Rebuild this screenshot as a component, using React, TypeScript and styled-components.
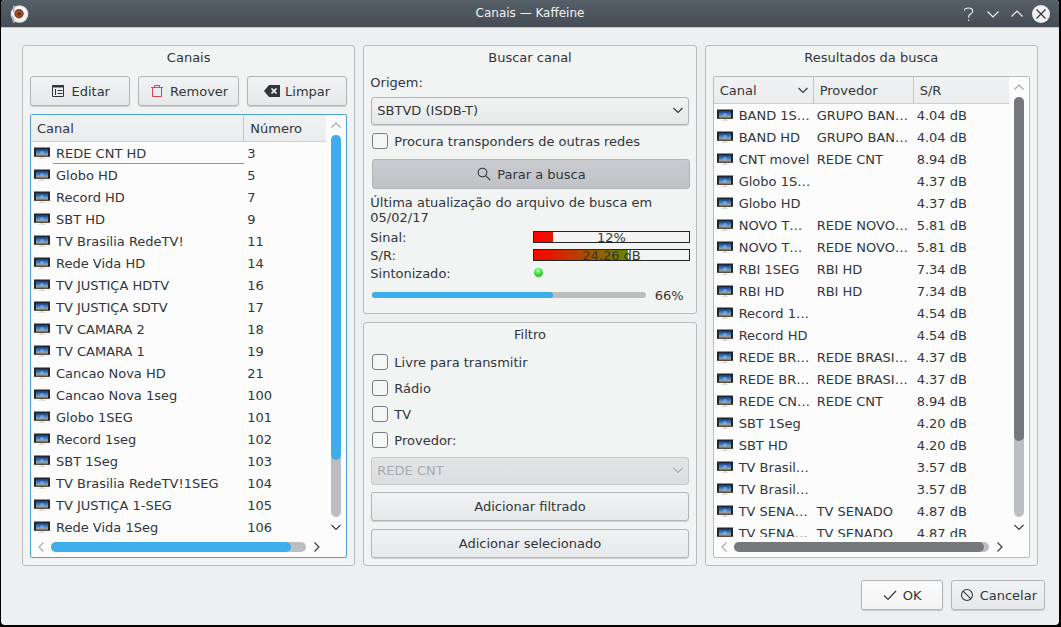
import React from "react";
import styled, { createGlobalStyle, css } from "styled-components";

const ink = "#31363b";
const line = "#b9bbbc";
const blue = "#3daee9";

const GlobalStyle = createGlobalStyle`
  * { box-sizing: border-box; }
  body {
    margin: 0;
    background: #000;
    color: ${ink};
    font: 13px/15px "DejaVu Sans", sans-serif;
  }
  button, select, input { font: inherit; color: inherit; margin: 0; }
`;

const Desktop = styled.div`
  display: flex;
  min-height: 100vh;
  padding: 0 2px 2px 1px;
`;

const Window = styled.div`
  flex: 1;
  min-width: 0;
  display: flex;
  flex-direction: column;
  overflow: hidden;
  background: #eeeff1;
  border-radius: 4px;
`;

const TitleBar = styled.header`
  display: grid;
  grid-template-columns: 1fr auto 1fr;
  align-items: center;
  height: 28px;
  padding: 0 8px;
  color: #eff0f1;
  background: linear-gradient(#566069, #454c54);
  border-bottom: 1px solid #7fe0ea;
`;

const WindowTitle = styled.h1`
  margin: 0;
  font-size: 12px;
  font-weight: 400;
`;

const WindowButtons = styled.div`
  display: flex;
  justify-content: flex-end;
  gap: 4px;
`;

const WindowButton = styled.button`
  display: flex;
  width: 20px;
  height: 20px;
  padding: 0;
  border: 0;
  background: none;
`;

const Columns = styled.main`
  flex: 1;
  display: grid;
  grid-template-columns: repeat(3, minmax(0, 1fr));
  gap: 8px;
  padding: 17px 21px 0;
`;

const Stack = styled.div`
  display: flex;
  flex-direction: column;
  gap: 8px;
`;

const Panel = styled.section<{ $grow?: boolean; $pad?: number }>`
  display: flex;
  flex-direction: column;
  flex: ${(p) => (p.$grow ? "1 0 auto" : "none")};
  padding: 4px ${(p) => p.$pad ?? 7}px 7px;
  background: #f2f3f3;
  border: 1px solid ${line};
  border-radius: 3px;
`;

const PanelTitle = styled.h2<{ $gap?: number }>`
  margin: 0 0 ${(p) => p.$gap ?? 11}px;
  font-size: 13px;
  font-weight: 400;
  text-align: center;
`;

const Toolbar = styled.div`
  display: grid;
  grid-template-columns: repeat(3, 1fr);
  gap: 8px;
  margin-bottom: 8px;
`;

const Button = styled.button<{ $pressed?: boolean; $light?: boolean }>`
  display: flex;
  align-items: center;
  justify-content: center;
  gap: 5px;
  height: 30px;
  padding: 0 7px;
  white-space: nowrap;
  border: 1px solid #b2b5b7;
  border-radius: 3px;
  background: ${(p) => (p.$light ? "linear-gradient(#fbfbfb, #f4f4f5)" : "linear-gradient(#f1f2f3, #e6e8e9)")};
  box-shadow: 0 1px 1px rgba(0, 0, 0, 0.15);
  ${(p) =>
    p.$pressed &&
    css`
      background: linear-gradient(#cacbce, #c1c2c6);
      box-shadow: none;
    `}
`;

const ListFrame = styled.div<{ $active?: boolean }>`
  flex: 1 1 0px;
  min-height: 0;
  display: grid;
  grid-template: minmax(0, 1fr) 20px / minmax(0, 1fr) 20px;
  overflow: hidden;
  background: #fcfcfd;
  border: 1px solid ${(p) => (p.$active ? "#4aa5cc" : line)};
  border-radius: 2px;
`;

const Viewport = styled.div`
  overflow: hidden;
  min-height: 0;
  contain: size;
`;

const Table = styled.table`
  width: 100%;
  table-layout: fixed;
  border-spacing: 0;
`;

const Col = styled.col<{ $width?: string }>`
  width: ${(p) => p.$width ?? "auto"};
`;

const Th = styled.th`
  height: 27px;
  padding: 0 4px 0 6px;
  font-weight: 400;
  text-align: left;
  background: linear-gradient(#f0f1f2, #ebecee);
  border-bottom: 1px solid #cdcfd0;
  &:not(:last-child) { border-right: 1px solid #c3c5c6; }
`;

const SortHead = styled.span`
  display: flex;
  align-items: center;
  justify-content: space-between;
`;

const Td = styled.td`
  height: 22px;
  padding: 0 0 0 3px;
  overflow: hidden;
  white-space: nowrap;
  text-overflow: ellipsis;
`;

const NameCell = styled.div<{ $current?: boolean }>`
  display: flex;
  align-items: center;
  height: 22px;
  svg { flex: none; }
  span {
    flex: 1;
    min-width: 0;
    height: 22px;
    margin-left: 3px;
    padding-left: 3px;
    line-height: 23px;
    overflow: hidden;
    text-overflow: ellipsis;
    ${(p) => p.$current && `box-shadow: inset 0 -1px 0 0 ${blue};`}
  }
`;

const Bar = styled.div<{ $vertical?: boolean }>`
  display: flex;
  flex-direction: ${(p) => (p.$vertical ? "column" : "row")};
  align-items: center;
`;

const BarArrow = styled.button`
  display: flex;
  align-items: center;
  justify-content: center;
  width: 20px;
  height: 20px;
  padding: 0;
  border: 0;
  background: none;
  &:disabled { color: #a5a8aa; }
`;

const Track = styled.div<{ $vertical?: boolean }>`
  flex: 1;
  ${(p) => (p.$vertical ? "width: 10px;" : "height: 10px;")}
  border-radius: 5px;
  background: #bdbec1;
`;

const Thumb = styled.div<{ $color: string }>`
  width: 100%;
  height: 100%;
  border-radius: 5px;
  background: ${(p) => p.$color};
`;

const FieldLabel = styled.label`
  margin-bottom: 7px;
`;

const SelectBox = styled.div`
  position: relative;
  margin: 0 1px;
  svg {
    position: absolute;
    right: 5px;
    top: 7px;
    pointer-events: none;
  }
`;

const Select = styled.select`
  display: block;
  width: 100%;
  height: 28px;
  padding: 0 24px 1px 5px;
  appearance: none;
  border: 1px solid #b2b5b7;
  border-radius: 3px;
  background: linear-gradient(#f1f2f2, #e6e8e8);
  box-shadow: 0 1px 1px rgba(0, 0, 0, 0.15);
  &:disabled {
    opacity: 1;
    color: #a9abae;
    border-color: #c6c7c9;
    background: linear-gradient(#e3e4e6, #dcdddf);
    box-shadow: none;
  }
  &:disabled + svg { color: #a9abae; }
`;

const CheckLabel = styled.label`
  display: flex;
  align-items: center;
  gap: 6px;
  height: 16px;
  margin-left: 2px;
`;

const CheckBox = styled.input`
  appearance: none;
  flex: none;
  width: 16px;
  height: 16px;
  border: 1px solid #7c7f82;
  border-radius: 3px;
  background: #f6f6f7;
`;

const SearchOptions = styled.div`
  display: grid;
  gap: 10px;
  margin: 8px 0 6px;
`;

const SearchButton = styled(Button)`
  margin-left: 2px;
`;

const Note = styled.p`
  margin: 0 0 4px;
`;

const Status = styled.dl`
  display: grid;
  grid-template-columns: 163px minmax(0, 1fr);
  grid-auto-rows: 16px;
  row-gap: 2px;
  align-items: center;
  margin: 0 0 6px;
  dd { margin: 0; }
`;

const Meter = styled.div<{ $fill: string }>`
  display: flex;
  align-items: center;
  justify-content: center;
  height: 12px;
  padding-top: 1px;
  line-height: 11px;
  border: 1px solid #232629;
  background: linear-gradient(90deg, #ff0000, #00e000) padding-box;
  position: relative;
  &::before {
    content: "";
    position: absolute;
    inset: 0 0 0 ${(p) => p.$fill};
    background: #f4f4f4;
  }
  span { position: relative; }
`;

const ProgressRow = styled.div`
  display: flex;
  align-items: center;
  gap: 9px;
  height: 16px;
  margin: 0 6px 3px 2px;
`;

const ProgressTrack = styled.div`
  flex: 1;
  height: 6px;
  border-radius: 3px;
  background: #bdbdbf;
`;

const ProgressFill = styled.div`
  height: 6px;
  border-radius: 3px;
  background: ${blue};
`;

const CheckGroup = styled.div`
  display: grid;
  gap: 10px;
  margin-bottom: 9px;
`;

const Actions = styled.div`
  display: grid;
  gap: 8px;
  margin: 7px 1px 0;
`;

const ActionButton = styled(Button)`
  height: 29px;
`;

const Footer = styled.footer`
  display: flex;
  justify-content: flex-end;
  gap: 8px;
  padding: 14px 14px 15px;
`;

const FooterButton = styled(Button)`
  min-width: 82px;
`;

type Dir = "up" | "down" | "left" | "right";
const chevrons: Record<Dir, string> = {
  up: "M1.5 8.5 6 4l4.5 4.5",
  down: "M1.5 4 6 8.5l4.5-4.5",
  left: "M8.5 1.5 4 6l4.5 4.5",
  right: "M4.5 1.5 9 6l-4.5 4.5",
};

const Chevron = ({ dir, size = 12 }: { dir: Dir; size?: number }) => (
  <svg width={size} height={size} viewBox="0 0 12 12" fill="none" stroke="currentColor" strokeWidth="1.1">
    <path d={chevrons[dir]} />
  </svg>
);

const TvIcon = () => (
  <svg width="16" height="12" viewBox="0 0 16 12">
    <defs>
      <linearGradient id="screen" x1="0" y1="0" x2="0" y2="1">
        <stop offset="0" stopColor="#16386f" />
        <stop offset=".5" stopColor="#4482c8" />
        <stop offset=".75" stopColor="#8aa3b4" />
        <stop offset="1" stopColor="#806a48" />
      </linearGradient>
    </defs>
    <path d="M0 .5h16V10H0z" fill="#20262e" />
    <path d="M2 2h12v7H2z" fill="url(#screen)" />
    <circle cx="8" cy="5.7" r="1.7" fill="#8fc0ea" opacity=".6" />
    <path d="M0 9.5h16" stroke="#6b5940" strokeWidth=".8" />
    <path d="M6.500 10h3v1h2v.8h-7V11h2z" fill="#d2d3d3" />
  </svg>
);

const AppIcon = () => (
  <svg width="20" height="20" viewBox="0 0 20 20">
    <circle cx="10.500" cy="10" r="8.800" fill="#e9e7e5" />
    <circle cx="10.800" cy="9.800" r="7" fill="#fbfaf9" />
    <circle cx="10" cy="9.700" r="4.700" fill="#7d402a" />
    <circle cx="10" cy="9.700" r="3.200" fill="#a4501f" />
    <circle cx="10.200" cy="9.700" r="1.500" fill="#5f2816" />
    <path d="M5 2.500 4.500 7M3.500 13l1.500 5" stroke="#b4b7ba" strokeWidth="2" strokeLinecap="round" />
  </svg>
);

const EditIcon = () => (
  <svg width="16" height="16" viewBox="0 0 16 16" fill="none" stroke="currentColor">
    <path d="M2.500 2.500h11v11h-11z" />
    <path d="M2 3.500h12" strokeWidth="2" />
    <path d="M5.500 6v6M7.500 7.500h5M7.500 10.500h5" />
  </svg>
);

const TrashIcon = () => (
  <svg width="16" height="16" viewBox="0 0 16 16" fill="none" stroke="#da4453">
    <path d="M2 4.500h12M5.500 4.500v-2h5v2M3.500 5v8.500h9V5" />
  </svg>
);

const ClearIcon = () => (
  <svg width="16" height="16" viewBox="0 0 16 16">
    <path d="M0 8l5-6h11v12H5z" fill="#31363b" />
    <path d="M7.500 5.500l5 5M12.500 5.500l-5 5" stroke="#fff" strokeWidth="1.600" />
  </svg>
);

const SearchIcon = () => (
  <svg width="16" height="16" viewBox="0 0 16 16" fill="none" stroke="currentColor" strokeWidth="1.100">
    <circle cx="6.500" cy="6.500" r="4.300" />
    <path d="M9.600 9.600l4.600 4.600" />
  </svg>
);

const OkIcon = () => (
  <svg width="16" height="16" viewBox="0 0 16 16" fill="none" stroke="currentColor" strokeWidth="1.100">
    <path d="M2 8.500l4 4 8-8.500" />
  </svg>
);

const CancelIcon = () => (
  <svg width="16" height="16" viewBox="0 0 16 16" fill="none" stroke="currentColor" strokeWidth="1.100">
    <circle cx="8" cy="8" r="5.500" />
    <path d="M4.100 4.100l7.800 7.800" />
  </svg>
);

const Led = () => (
  <svg width="11" height="16" viewBox="0 0 11 16">
    <defs>
      <radialGradient id="led" cx=".45" cy=".3" r=".65">
        <stop offset="0" stopColor="#c6ffc2" />
        <stop offset=".5" stopColor="#4fe84b" />
        <stop offset="1" stopColor="#26bd2c" />
      </radialGradient>
    </defs>
    <circle cx="5.500" cy="8.500" r="4.500" fill="url(#led)" />
  </svg>
);

const HelpGlyph = () => (
  <svg width="20" height="20" viewBox="0 0 20 20" fill="none" stroke="#eff0f1" strokeWidth="1.100">
    <path d="M5.500 6.500C5.500 4.700 7.200 4 9.500 4s4.200.9 4.200 3.200c0 2.600-4 2.500-4 5.300v1.200M9.700 15.500V17" />
  </svg>
);

const CloseGlyph = () => (
  <svg width="20" height="20" viewBox="0 0 20 20">
    <circle cx="10" cy="10" r="9" fill="#eff0f1" />
    <path d="M5.500 5.500l9 9M14.500 5.500l-9 9" stroke="#31363b" strokeWidth="1.200" />
  </svg>
);

const ShadeGlyph = ({ up }: { up?: boolean }) => (
  <svg width="20" height="20" viewBox="0 0 20 20" fill="none" stroke="#eff0f1" strokeWidth="1.200">
    <path d={up ? "M4.500 12.500l5.500-5.500 5.500 5.500" : "M4.500 7.500l5.500 5.500 5.500-5.500"} />
  </svg>
);

const channels: [string, number][] = [
  ["REDE CNT HD", 3],
  ["Globo HD", 5],
  ["Record HD", 7],
  ["SBT HD", 9],
  ["TV Brasilia RedeTV!", 11],
  ["Rede Vida HD", 14],
  ["TV JUSTIÇA HDTV", 16],
  ["TV JUSTIÇA SDTV", 17],
  ["TV CAMARA 2", 18],
  ["TV CAMARA 1", 19],
  ["Cancao Nova HD", 21],
  ["Cancao Nova 1seg", 100],
  ["Globo 1SEG", 101],
  ["Record 1seg", 102],
  ["SBT 1Seg", 103],
  ["TV Brasilia RedeTV!1SEG", 104],
  ["TV JUSTIÇA 1-SEG", 105],
  ["Rede Vida 1Seg", 106],
];

const results: [string, string, string][] = [
  ["BAND 1S…", "GRUPO BAN…", "4.04"],
  ["BAND HD", "GRUPO BAN…", "4.04"],
  ["CNT movel", "REDE CNT", "8.94"],
  ["Globo 1S…", "", "4.37"],
  ["Globo HD", "", "4.37"],
  ["NOVO T…", "REDE NOVO…", "5.81"],
  ["NOVO T…", "REDE NOVO…", "5.81"],
  ["RBI 1SEG", "RBI HD", "7.34"],
  ["RBI HD", "RBI HD", "7.34"],
  ["Record 1…", "", "4.54"],
  ["Record HD", "", "4.54"],
  ["REDE BR…", "REDE BRASI…", "4.37"],
  ["REDE BR…", "REDE BRASI…", "4.37"],
  ["REDE CN…", "REDE CNT", "8.94"],
  ["SBT 1Seg", "", "4.20"],
  ["SBT HD", "", "4.20"],
  ["TV Brasil…", "", "3.57"],
  ["TV Brasil…", "", "3.57"],
  ["TV SENA…", "TV SENADO", "4.87"],
  ["TV SENA…", "TV SENADO", "4.87"],
];

interface ScrollProps {
  vertical?: boolean;
  color: string;
  size: number;
}

const ScrollBar = ({ vertical, color, size }: ScrollProps) => (
  <Bar $vertical={vertical}>
    <BarArrow disabled aria-label={vertical ? "Rolar para cima" : "Rolar para a esquerda"}>
      <Chevron dir={vertical ? "up" : "left"} />
    </BarArrow>
    <Track $vertical={vertical}>
      <Thumb $color={color} style={vertical ? { height: `${size}%` } : { width: `${size}%` }} />
    </Track>
    <BarArrow aria-label={vertical ? "Rolar para baixo" : "Rolar para a direita"}>
      <Chevron dir={vertical ? "down" : "right"} />
    </BarArrow>
  </Bar>
);

const Check = ({ label }: { label: string }) => (
  <CheckLabel>
    <CheckBox type="checkbox" />
    {label}
  </CheckLabel>
);

const Name = ({ text, current }: { text: string; current?: boolean }) => (
  <NameCell $current={current}>
    <TvIcon />
    <span>{text}</span>
  </NameCell>
);

export default function App() {
  return (
    <Desktop>
      <GlobalStyle />
      <Window>
        <TitleBar>
          <AppIcon />
          <WindowTitle>Canais — Kaffeine</WindowTitle>
          <WindowButtons>
            <WindowButton aria-label="Ajuda"><HelpGlyph /></WindowButton>
            <WindowButton aria-label="Minimizar"><ShadeGlyph /></WindowButton>
            <WindowButton aria-label="Maximizar"><ShadeGlyph up /></WindowButton>
            <WindowButton aria-label="Fechar"><CloseGlyph /></WindowButton>
          </WindowButtons>
        </TitleBar>

        <Columns>
          <Panel>
            <PanelTitle>Canais</PanelTitle>
            <Toolbar>
              <Button><EditIcon />Editar</Button>
              <Button><TrashIcon />Remover</Button>
              <Button><ClearIcon />Limpar</Button>
            </Toolbar>
            <ListFrame $active>
              <Viewport>
                <Table>
                  <colgroup><Col /><Col $width="82px" /></colgroup>
                  <thead>
                    <tr><Th>Canal</Th><Th>Número</Th></tr>
                  </thead>
                  <tbody>
                    {channels.map(([name, number], i) => (
                      <tr key={number}>
                        <Td><Name text={name} current={i === 0} /></Td>
                        <Td>{number}</Td>
                      </tr>
                    ))}
                  </tbody>
                </Table>
              </Viewport>
              <ScrollBar vertical color={blue} size={85} />
              <ScrollBar color={blue} size={94} />
            </ListFrame>
          </Panel>

          <Stack>
            <Panel $pad={6}>
              <PanelTitle $gap={10}>Buscar canal</PanelTitle>
              <FieldLabel htmlFor="source">Origem:</FieldLabel>
              <SelectBox>
                <Select id="source"><option>SBTVD (ISDB-T)</option></Select>
                <Chevron dir="down" />
              </SelectBox>
              <SearchOptions>
                <Check label="Procura transponders de outras redes" />
                <SearchButton $pressed><SearchIcon />Parar a busca</SearchButton>
              </SearchOptions>
              <Note>Última atualização do arquivo de busca em 05/02/17</Note>
              <Status>
                <dt>Sinal:</dt>
                <dd><Meter $fill="12%"><span>12%</span></Meter></dd>
                <dt>S/R:</dt>
                <dd><Meter $fill="61%"><span>24.26 dB</span></Meter></dd>
                <dt>Sintonizado:</dt>
                <dd><Led /></dd>
              </Status>
              <ProgressRow>
                <ProgressTrack role="progressbar" aria-valuenow={66}>
                  <ProgressFill style={{ width: "66%" }} />
                </ProgressTrack>
                66%
              </ProgressRow>
            </Panel>

            <Panel $grow $pad={6}>
              <PanelTitle $gap={12}>Filtro</PanelTitle>
              <CheckGroup>
                <Check label="Livre para transmitir" />
                <Check label="Rádio" />
                <Check label="TV" />
                <Check label="Provedor:" />
              </CheckGroup>
              <SelectBox>
                <Select disabled aria-label="Provedor"><option>REDE CNT</option></Select>
                <Chevron dir="down" />
              </SelectBox>
              <Actions>
                <ActionButton>Adicionar filtrado</ActionButton>
                <ActionButton>Adicionar selecionado</ActionButton>
              </Actions>
            </Panel>
          </Stack>

          <Panel>
            <PanelTitle>Resultados da busca</PanelTitle>
            <ListFrame>
              <Viewport>
                <Table>
                  <colgroup><Col $width="100px" /><Col $width="100px" /><Col /></colgroup>
                  <thead>
                    <tr>
                      <Th><SortHead>Canal<Chevron dir="down" /></SortHead></Th>
                      <Th>Provedor</Th>
                      <Th>S/R</Th>
                    </tr>
                  </thead>
                  <tbody>
                    {results.map(([name, provider, snr], i) => (
                      <tr key={i}>
                        <Td><Name text={name} /></Td>
                        <Td>{provider}</Td>
                        <Td>{snr} dB</Td>
                      </tr>
                    ))}
                  </tbody>
                </Table>
              </Viewport>
              <ScrollBar vertical color="#77787c" size={82} />
              <ScrollBar color="#77787c" size={98} />
            </ListFrame>
          </Panel>
        </Columns>

        <Footer>
          <FooterButton $light><OkIcon />OK</FooterButton>
          <FooterButton><CancelIcon />Cancelar</FooterButton>
        </Footer>
      </Window>
    </Desktop>
  );
}
